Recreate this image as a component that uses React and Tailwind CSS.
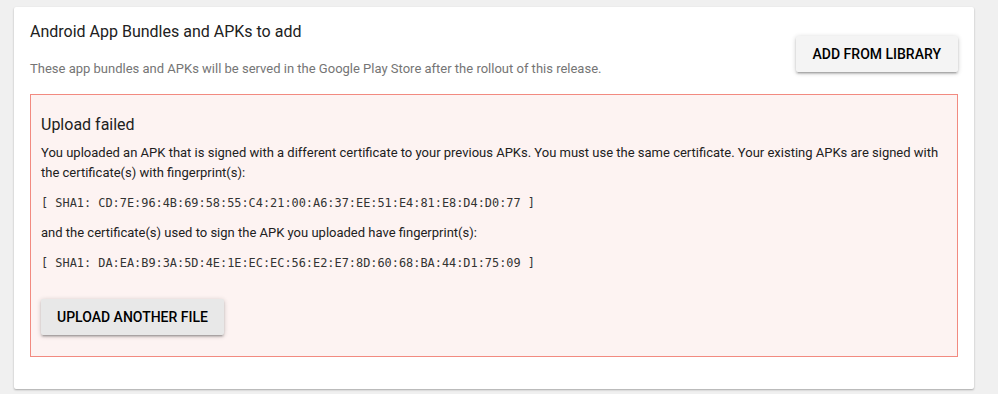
import React from "react";

const FONT = { fontFamily: "Roboto, 'Noto Sans', Arial, sans-serif" };

const raised =
  "rounded-[2px] shadow-[0_2px_2px_0_rgba(0,0,0,0.14),0_3px_1px_-2px_rgba(0,0,0,0.12),0_1px_5px_0_rgba(0,0,0,0.2)]";

function Fingerprint({ value }) {
  return (
    <p className="mb-[10px] font-['DejaVu_Sans_Mono',monospace] text-[11.9px] leading-[20px] text-[#333333] whitespace-pre">
      {`[ SHA1: ${value} ]`}
    </p>
  );
}

export default function App() {
  return (
    <div className="min-h-[394px] w-full bg-[#f0f0f0] pt-[7px]" style={FONT}>
      <div className="ml-[14px] w-[960px] rounded-[2px] bg-white px-4 pt-[13px] pb-[32px] shadow-[0_1px_2px_rgba(0,0,0,0.3)]">
        <header className="flex items-start justify-between">
          <div>
            <h2 className="text-[16px] leading-[24px] text-[#212121]">Android App Bundles and APKs to add</h2>
            <p className="mt-[15px] text-[13px] leading-[20px] text-[#757575]">
              These app bundles and APKs will be served in the Google Play Store after the rollout of this release.
            </p>
          </div>
          <button
            className={`mt-[16px] h-[36px] bg-[#f4f4f4] px-[17px] text-[14px] font-medium text-black ${raised}`}
          >
            ADD FROM LIBRARY
          </button>
        </header>

        <div className="mt-[15px] border border-[#f28a80] bg-[#fdf3f2] px-[10px] pt-[18px] pb-[21px]">
          <h3 className="mb-[6px] text-[16px] leading-[24px] text-[#212121]">Upload failed</h3>
          <p className="mb-[10px] text-[13px] leading-[20px] text-[#212121]">
            You uploaded an APK that is signed with a different certificate to your previous APKs. You must use the same
            certificate. Your existing APKs are signed with the certificate(s) with fingerprint(s):
          </p>
          <Fingerprint value="CD:7E:96:4B:69:58:55:C4:21:00:A6:37:EE:51:E4:81:E8:D4:D0:77" />
          <p className="mb-[10px] text-[13px] leading-[20px] text-[#212121]">
            and the certificate(s) used to sign the APK you uploaded have fingerprint(s):
          </p>
          <Fingerprint value="DA:EA:B9:3A:5D:4E:1E:EC:EC:56:E2:E7:8D:60:68:BA:44:D1:75:09" />
          <button
            className={`mt-[16px] h-[36px] bg-[#e8e8e8] px-4 text-[14px] font-medium text-black ${raised}`}
          >
            UPLOAD ANOTHER FILE
          </button>
        </div>
      </div>
    </div>
  );
}
